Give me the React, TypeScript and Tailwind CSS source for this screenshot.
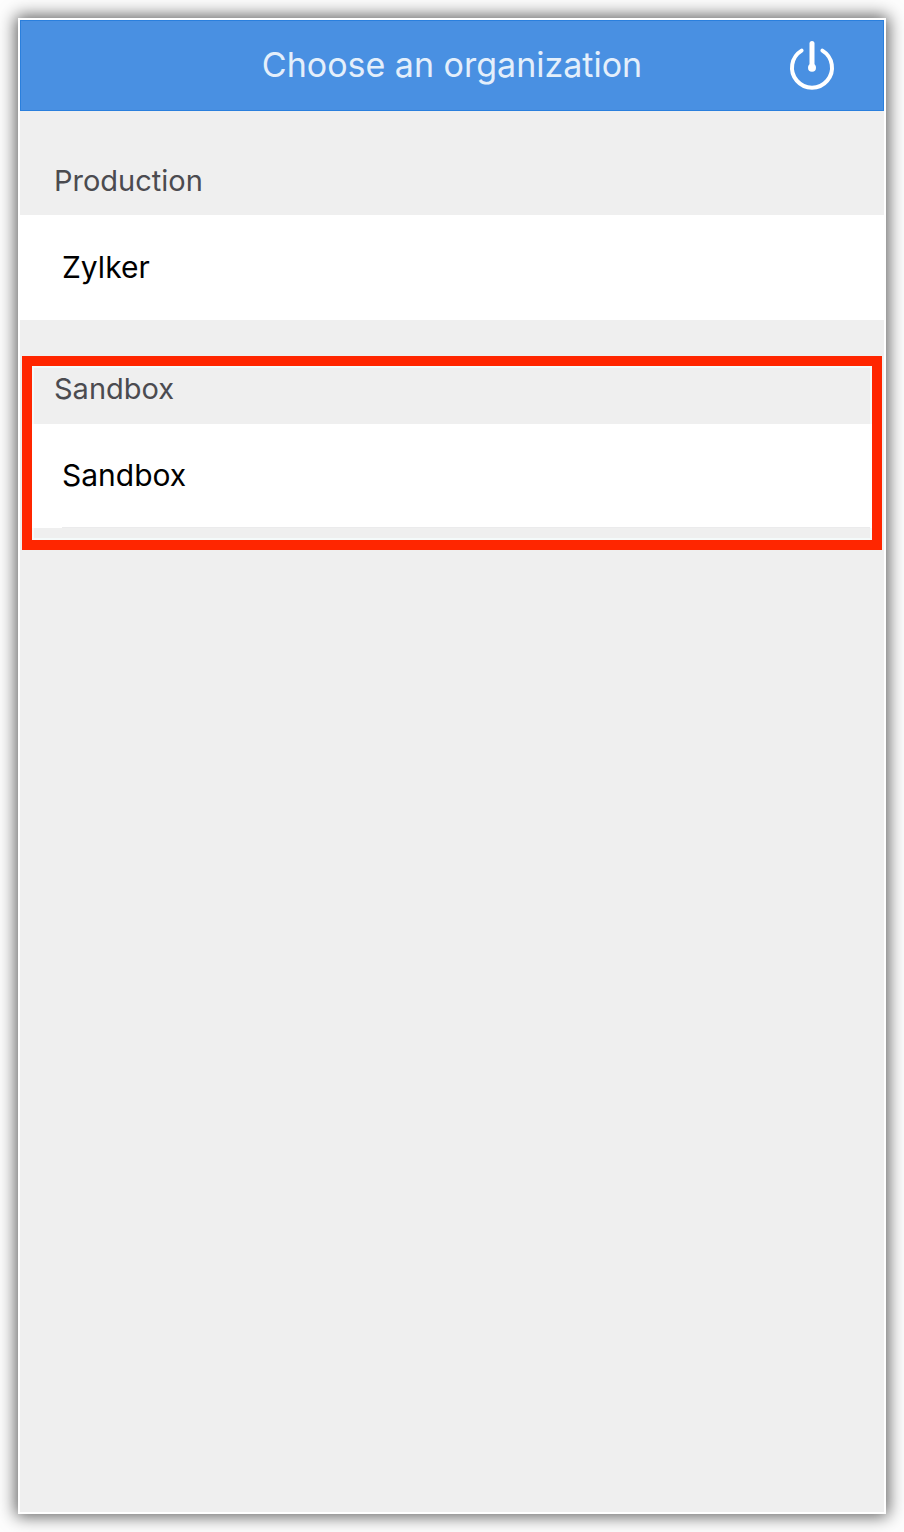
type Group = {
    title: string
    orgs: string[]
    highlighted?: boolean
}

const groups: Group[] = [
    { title: 'Production', orgs: ['Zylker'] },
    { title: 'Sandbox', orgs: ['Sandbox'], highlighted: true },
]

function PowerIcon() {
    return (
        <svg width="48" height="52" viewBox="0 0 48 52" fill="none" stroke="#fff" strokeWidth="4" strokeLinecap="round" aria-hidden="true">
            <path d="M13.6 10.6A20 20 0 1 0 34.4 10.6" />
            <path d="M24 3.5V27" strokeWidth="5" />
            <circle cx="24" cy="27.8" r="4" fill="#fff" stroke="none" />
        </svg>
    )
}

function Header() {
    return (
        <header className="grid h-[91px] grid-cols-[1fr_auto_1fr] items-center border border-[#2a7fdd] bg-[#4990e2]">
            <h1 className="col-start-2 pb-0.5 text-[34px] leading-10 text-[#e4effb]">Choose an organization</h1>
            <button type="button" aria-label="Sign out" className="mr-[47px] justify-self-end">
                <PowerIcon />
            </button>
        </header>
    )
}

function OrgGroup({ group }: { group: Group }) {
    if (group.highlighted) {
        return (
            <section className="mx-0.5 mt-9 border-10 border-[#ff2600]">
                <div className="border-x-2 border-t-2 border-[#f4fafa]">
                    <h2 className="h-14 px-5 text-[29px] leading-[42px] text-[#4b4b50]">{group.title}</h2>
                </div>
                {group.orgs.map((org) => (
                    <div key={org} className="bg-white">
                        <button type="button" className="block h-[103px] w-full px-[30px] text-left text-[30px] text-black">
                            {org}
                        </button>
                        <div className="mr-0.5 ml-[30px] h-px bg-[#ebebec]" />
                    </div>
                ))}
                <div className="h-3 border-x-2 border-b-2 border-[#f4fafa]" />
            </section>
        )
    }

    return (
        <section>
            <h2 className="px-[34px] pt-[49px] pb-[13px] text-[29px] leading-[42px] text-[#4b4b50]">{group.title}</h2>
            {group.orgs.map((org) => (
                <button key={org} type="button" className="block h-[105px] w-full bg-white px-[42px] text-left text-[30px] text-black">
                    {org}
                </button>
            ))}
        </section>
    )
}

export default function App() {
    return (
        <div className="flex min-h-screen bg-[#fdfdfd] p-[18px] font-['Inter',sans-serif]">
            <main className="flex-1 border-2 border-white bg-[#efefef] shadow-[0_0_16px_2px_rgba(0,0,0,0.65)]">
                <Header />
                {groups.map((group) => (
                    <OrgGroup key={group.title} group={group} />
                ))}
            </main>
        </div>
    )
}
